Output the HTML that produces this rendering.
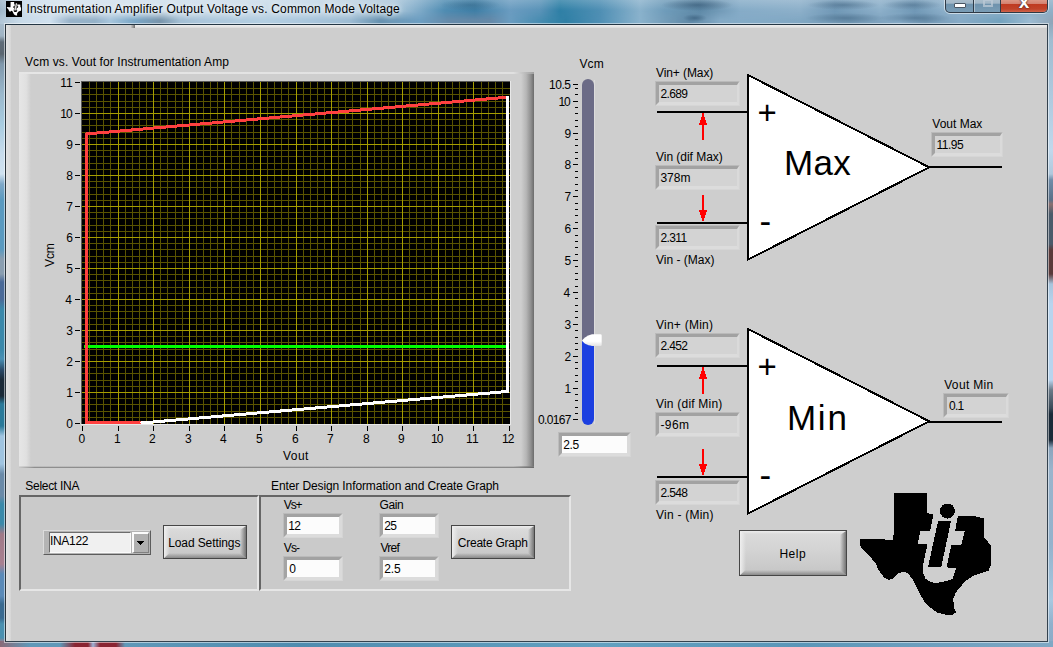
<!DOCTYPE html><html lang="en"><head><meta charset="utf-8"><title>Instrumentation Amplifier Output Voltage vs. Common Mode Voltage</title><style>
html,body{margin:0;padding:0;}
body{width:1053px;height:647px;overflow:hidden;position:relative;background:#6a9bb8;font-family:"Liberation Sans",sans-serif;font-size:12px;color:#000;}
.abs,.t,.ind,.num,.btn,.pnl{position:absolute;box-sizing:border-box;}
svg{position:absolute;overflow:visible;}
.t{white-space:nowrap;line-height:14px;}
#frame{position:absolute;left:0;top:0;width:1053px;height:647px;background:#6f9dbb;}
#tb{position:absolute;left:0;top:0;width:1053px;height:25px;background:
 linear-gradient(180deg,rgba(255,255,255,.18) 0,rgba(255,255,255,0) 40%),
 linear-gradient(90deg,#9fb6c8 0,#c9dbe9 24px,#d3e2ee 60px,#cadcea 250px,#c0d5e5 340px,#a9c6da 395px,#7eaac8 420px,#4f8cb2 445px,#3f7fa6 475px,#6a9cc0 510px,#5a93b8 540px,#2f80a6 560px,#4f8fb4 600px,#8ab2cc 640px,#6f9cba 665px,#5f8aa8 700px,#86acc8 740px,#8db0ca 800px,#7098b6 835px,#8db0ca 880px,#7098b6 915px,#8db0ca 945px,#8fb0c8 1053px);}
#tb2{position:absolute;left:0;top:11px;width:1053px;height:13px;-webkit-mask-image:linear-gradient(180deg,transparent 0,rgba(0,0,0,.85) 70%,rgba(0,0,0,.85) 100%);mask-image:linear-gradient(180deg,transparent 0,rgba(0,0,0,.85) 70%,rgba(0,0,0,.85) 100%);background:
 linear-gradient(90deg,#b4c8d8 0,#c8dae8 20px,#d0e0ee 50px,#8eaac2 70px,#8aa8c0 95px,#a0c0d8 110px,#6a9cc0 135px,#6a88a0 160px,#9cbad0 180px,#a5c2d8 200px,#b0cce0 264px,#a8c6dc 300px,#98b8d0 350px,#5a88a8 380px,#6494b6 400px,#6a9cc0 420px,#6a8aa8 450px,#6888a6 490px,#6a9cc0 510px,#3a86aa 550px,#2f7fa5 566px,#4f8fb4 600px,#8ab2cc 640px,#5f88a6 690px,#86acc8 720px,#7fa6c2 800px,#6f94b0 850px,#86aac6 900px,#6f94b0 925px,#86aac6 960px,#6fa0bc 1000px,#9dbcd2 1030px,#8fa3b5 1053px);}
#tb3{position:absolute;left:0;top:0;width:1053px;height:24px;background:
 radial-gradient(ellipse 36px 6px at 697px 5px,rgba(40,75,105,.55),rgba(40,75,105,0)),
 radial-gradient(ellipse 12px 4px at 695px 18px,rgba(40,75,105,.5),rgba(40,75,105,0)),
 radial-gradient(ellipse 36px 5px at 843px 5px,rgba(50,85,115,.45),rgba(50,85,115,0)),
 radial-gradient(ellipse 30px 5px at 912px 5px,rgba(50,85,115,.4),rgba(50,85,115,0)),
 radial-gradient(ellipse 40px 5px at 845px 18px,rgba(50,85,115,.4),rgba(50,85,115,0)),
 radial-gradient(ellipse 36px 5px at 915px 18px,rgba(50,85,115,.4),rgba(50,85,115,0)),
 radial-gradient(ellipse 30px 6px at 470px 5px,rgba(30,80,115,.35),rgba(30,80,115,0));}
#lb{position:absolute;left:0;top:24px;width:6px;height:623px;background:linear-gradient(180deg,#a8bccc 0px,#a0b4c4 12px,#5f6c78 18px,#5a6670 30px,#8098ac 40px,#9ab8cc 70px,#a8cce0 100px,#c8dcec 130px,#d0e2f0 150px,#7fa8c8 160px,#5a9ac0 176px,#5a9ac0 225px,#8a9eb0 235px,#8a9eb0 250px,#4a6a98 258px,#4a6a98 275px,#3a88aa 285px,#3a88aa 325px,#4a90b4 335px,#2a4a68 346px,#1a2a38 356px,#1a2a38 372px,#2a7a9a 380px,#2a7a9a 402px,#a0c4e0 412px,#a0c4e0 440px,#6a8aa8 450px,#6a8aa8 472px,#3a8aaa 480px,#3a8aaa 500px,#a07a88 510px,#a88090 540px,#5a8ab8 550px,#5a8ab8 572px,#3a6a90 580px,#3a6a90 594px,#4a90b0 600px,#4a90b0 614px,#a08090 618px,#a08090 623px);}
#rb{position:absolute;left:1047px;top:24px;width:6px;height:623px;background:linear-gradient(180deg,#8fa8bc 0px,#a0bcd0 16px,#b0cadf 76px,#c0d8ec 126px,#b0c8dc 150px,#6f8ca8 156px,#5a7088 176px,#8a7070 180px,#4a5a6a 190px,#4a5a6a 220px,#5a3a3a 226px,#5a3a3a 250px,#a8c4dc 260px,#b8d4ee 280px,#b8d4ee 356px,#6a7a88 366px,#3a4a58 384px,#1a2a38 390px,#1a2a38 416px,#8aa4bc 424px,#9ab4cc 446px,#94b2cc 520px,#a8c8e0 576px,#90b0cc 600px,#8aaac6 623px);}
#bb{position:absolute;left:0;top:641px;width:1053px;height:6px;background:linear-gradient(90deg,#8a6a78 0,#5f98b8 30px,#5f98b8 60px,#8a2432 75px,#8a2432 88px,#9fb4d8 93px,#8a2432 100px,#8a2432 116px,#5f98b8 125px,#4f8caf 300px,#62a0c0 600px,#5a96b8 800px,#7fa8c4 1053px);}
#client{position:absolute;left:5px;top:24px;width:1043px;height:618px;background:#cecece;border:1px solid;border-color:#243644 #34424e #34424e #2a343c;box-sizing:border-box;}
.ind{border-style:solid;border-width:1px;border-color:#bababa #d4d4d4 #d6d6d6 #bcbcbc;background:#d3d3d3;}
.ind i{position:absolute;left:0;top:0;right:0;bottom:0;border-style:solid;border-width:3px 2px 3px 3px;border-color:#a2a2a2 #dadada #dcdcdc #a4a4a4;}
.num{border-style:solid;border-width:1px;border-color:#bababa #d4d4d4 #d6d6d6 #bcbcbc;background:#fcfcfc;}
.num i{position:absolute;left:0;top:0;right:0;bottom:0;border-style:solid;border-width:3px;border-color:#a2a2a2 #dadada #dcdcdc #a4a4a4;}
.btn{border:1px solid #464646;background:linear-gradient(180deg,#dcdcdc 0,#d3d3d3 45%,#c5c5c5 100%);}
.btn i{position:absolute;display:block;}
.bt{left:0;right:0;top:0;height:3px;background:linear-gradient(180deg,#ededed,rgba(230,230,230,0));}
.bb{left:0;right:0;bottom:0;height:5px;background:linear-gradient(180deg,rgba(150,150,150,0),#8a8a8a);clip-path:polygon(0 100%,5px 0,calc(100% - 6px) 0,100% 100%);}
.bl{left:0;top:0;bottom:0;width:6px;background:linear-gradient(90deg,#efefef,rgba(232,232,232,0));clip-path:polygon(0 0,100% 4px,100% calc(100% - 5px),0 100%);}
.br{right:0;top:0;bottom:0;width:6px;background:linear-gradient(90deg,rgba(160,160,160,0),#747474);clip-path:polygon(100% 0,0 4px,0 calc(100% - 5px),100% 100%);}
.pnl{border-style:solid;border-width:2px;border-color:#666 #e6e6e6 #e6e6e6 #666;background:#cacaca;}
</style></head><body>
<div id="frame"></div><div id="tb"></div><div id="tb2"></div><div id="tb3"></div><div id="lb"></div><div id="rb"></div><div id="bb"></div>
<div id="client"></div>
<div class="abs" style="left:6px;top:25px;width:5px;height:616px;background:linear-gradient(90deg,#e4e4e4,#d6d6d6);"></div>
<div class="abs" style="left:135px;top:25px;width:912px;height:3px;background:linear-gradient(180deg,#ededed,#e4e4e4 60%,#d8d8d8);"></div>
<div class="abs" style="left:131px;top:25px;width:4px;height:3px;background:linear-gradient(90deg,#c4c4c4,#9a9a9a 50%,#6c6c6c);"></div>
<svg style="left:6px;top:1px" width="16" height="16" viewBox="0 0 16 16"><rect width="16" height="16" fill="#000"/><g transform="translate(0.9 1) scale(0.1085 0.1115) translate(-860 -493)"><path d="M893.8 493H927.1V513L933.4 514.6L957.4 516.2H974.7L983.7 518.3L984.2 537.2L990.6 545.2V565.3L988.6 570.6L981.3 573.2L973.3 575.9L965.4 581.2L960 587.2L955.4 593.2L953.4 598.5L953.7 606.5L956 612.5L952.7 614.5L945.4 614.7L937.4 612.5L929.5 607.1L924.8 602.5L918.8 591.9L912.2 578.6L907.5 573L902.9 571.6L898.2 573.5L892.9 578.6L888.9 579.9L884.3 577.9L878.9 570.6L875.6 563.3L868.3 554.6L861 547.3L860 544V538.8L888.2 539.6H892.9L893.6 534.5Z" fill="#fff"/><path d="M933.6 513.6L958 515.2L955 531.2H964.7L961.4 544.5H951.4L947 565.1L947.6 567.9L956 568.3L952.7 578.6L948.1 580.6L937.4 582.8L930.8 582.3L925.5 578.6L923.1 572.6V565.3L927.5 543.8H917.8L920.4 531.2H930.1Z" fill="#000"/><path d="M938.1 521.2H951L941.4 566.5H928.1Z" fill="#ddd" stroke="#ddd" stroke-width="3"/><circle cx="947.5" cy="511" r="7.5" fill="#fff"/></g></svg>
<div class="t" style="left:26.40px;top:2px;letter-spacing:0.178px;text-shadow:0 0 5px rgba(255,255,255,.9),0 0 8px rgba(255,255,255,.7);">Instrumentation Amplifier Output Voltage vs. Common Mode Voltage</div>
<div class="abs" style="left:944px;top:-1px;width:105px;height:15px;border:1px solid rgba(255,255,255,.55);border-radius:0 0 6px 6px"></div>
<div class="abs" style="left:945px;top:0;width:103px;height:13px;border:1px solid #2e3a46;border-top:none;border-radius:0 0 5px 5px;background:linear-gradient(180deg,#aabdcb 0,#a2b7c7 28%,#6e92ac 32%,#7a9db6 100%);overflow:hidden"><div class="abs" style="left:27px;top:0;width:1px;height:13px;background:#2e3a46"></div><div class="abs" style="left:28px;top:0;width:1px;height:13px;background:rgba(255,255,255,.4)"></div><div class="abs" style="left:54px;top:0;width:1px;height:13px;background:#2e3a46"></div><div class="abs" style="left:55px;top:0;width:47px;height:13px;background:linear-gradient(180deg,#dc9886 0,#d48270 28%,#bf3a20 32%,#c0442a 70%,#d57058 100%)"></div><div class="abs" style="left:8px;top:3px;width:12px;height:5px;background:#fff;border:1px solid #4a5662;border-radius:1px"></div><div class="abs" style="left:37px;top:-2px;width:10px;height:9px;border:2px solid #bccad6;border-top-width:3px;opacity:.75"></div></div>
<div class="t" style="left:1018.80px;top:-9.00px;font-size:19px;line-height:22px;color:#fff;font-weight:bold;text-shadow:0 0 1px #3a2020,0 0 2px #4a2a2a;">x</div>
<div class="abs" style="left:4px;top:23px;width:1045px;height:620px;border:1px solid rgba(255,255,255,.5)"></div>
<div class="t" style="left:25.00px;top:55px;letter-spacing:0.091px;">Vcm vs. Vout for Instrumentation Amp</div>
<div class="abs" style="left:19px;top:72px;width:515px;height:396px;background:#cecece"><div class="abs" style="left:0;top:0;width:12px;height:100%;background:linear-gradient(90deg,#e6e6e6 0,#e0e0e0 60%,#cecece 100%)"></div><div class="abs" style="right:0;top:0;width:13px;height:100%;background:linear-gradient(90deg,#cecece 0,#b6b6b6 40%,#909090 75%,#6c6c6c 100%)"></div><div class="abs" style="left:0;top:0;width:100%;height:2px;background:linear-gradient(90deg,#e6e6e6 0,#e0e0e0 96%,#a0a0a0 100%)"></div><div class="abs" style="left:0;bottom:1px;width:100%;height:1px;background:linear-gradient(90deg,#d4d4d4 0,#bcbcbc 3%,#b8b8b8 96%,#7a7a7a 100%)"></div><div class="abs" style="left:0;bottom:0;width:100%;height:1px;background:linear-gradient(90deg,#c8c8c8 0,#8e8e8e 3%,#8a8a8a 97%,#6a6a6a 100%)"></div></div>
<svg style="left:0;top:0" width="1053" height="647" viewBox="0 0 1053 647"><rect x="81" y="81" width="430" height="344" fill="#e8e8e8"/><rect x="81" y="81" width="429" height="343" fill="#5a5a5a"/><rect x="82" y="82" width="428" height="342" fill="#000"/><clipPath id="pc"><rect x="82" y="82" width="428" height="342"/></clipPath><path d="M89.5 82V424M96.5 82V424M103.5 82V424M110.5 82V424M125.5 82V424M132.5 82V424M139.5 82V424M146.5 82V424M160.5 82V424M167.5 82V424M175.5 82V424M182.5 82V424M196.5 82V424M203.5 82V424M210.5 82V424M217.5 82V424M231.5 82V424M239.5 82V424M246.5 82V424M253.5 82V424M267.5 82V424M274.5 82V424M281.5 82V424M288.5 82V424M303.5 82V424M310.5 82V424M317.5 82V424M324.5 82V424M338.5 82V424M345.5 82V424M352.5 82V424M360.5 82V424M374.5 82V424M381.5 82V424M388.5 82V424M395.5 82V424M409.5 82V424M416.5 82V424M424.5 82V424M431.5 82V424M445.5 82V424M452.5 82V424M459.5 82V424M466.5 82V424M481.5 82V424M488.5 82V424M495.5 82V424M502.5 82V424M82 417.5H510M82 411.5H510M82 404.5H510M82 398.5H510M82 386.5H510M82 380.5H510M82 373.5H510M82 367.5H510M82 355.5H510M82 349.5H510M82 342.5H510M82 336.5H510M82 324.5H510M82 318.5H510M82 311.5H510M82 305.5H510M82 293.5H510M82 287.5H510M82 280.5H510M82 274.5H510M82 262.5H510M82 256.5H510M82 249.5H510M82 243.5H510M82 231.5H510M82 225.5H510M82 218.5H510M82 212.5H510M82 200.5H510M82 194.5H510M82 187.5H510M82 181.5H510M82 169.5H510M82 163.5H510M82 156.5H510M82 150.5H510M82 138.5H510M82 132.5H510M82 125.5H510M82 119.5H510M82 107.5H510M82 101.5H510M82 94.5H510M82 88.5H510" stroke="#5a5400" stroke-width="1" fill="none" shape-rendering="crispEdges"/><path d="M118.5 82V424M153.5 82V424M189.5 82V424M224.5 82V424M260.5 82V424M296.5 82V424M331.5 82V424M367.5 82V424M402.5 82V424M438.5 82V424M473.5 82V424M82 392.5H510M82 361.5H510M82 330.5H510M82 299.5H510M82 268.5H510M82 237.5H510M82 206.5H510M82 175.5H510M82 144.5H510M82 113.5H510" stroke="#a69e00" stroke-width="1" fill="none" shape-rendering="crispEdges"/><g clip-path="url(#pc)" fill="none" stroke-width="3" shape-rendering="crispEdges" stroke-linejoin="miter"><path d="M84 346.5H508" stroke="#00ff00"/><path d="M140.5 422.5H86.5V133.94L507.5 97.18" stroke="#ff4040"/><path d="M140.5 423.07L507.5 391.47V96" stroke="#fff"/></g><path d="M75 423.5H80M75 392.5H80M75 361.5H80M75 330.5H80M75 299.5H80M75 268.5H80M75 237.5H80M75 206.5H80M75 175.5H80M75 144.5H80M75 113.5H80M75 82.5H80M82.5 426V431M118.5 426V431M153.5 426V431M189.5 426V431M224.5 426V431M260.5 426V431M296.5 426V431M331.5 426V431M367.5 426V431M402.5 426V431M438.5 426V431M473.5 426V431M509.5 426V431" stroke="#000" stroke-width="1" fill="none" shape-rendering="crispEdges"/></svg>
<div class="t" style="left:66.30px;top:417px;">0</div>
<div class="t" style="left:66.30px;top:386px;">1</div>
<div class="t" style="left:66.30px;top:355px;">2</div>
<div class="t" style="left:66.30px;top:324px;">3</div>
<div class="t" style="left:65.30px;top:293px;">4</div>
<div class="t" style="left:66.30px;top:262px;">5</div>
<div class="t" style="left:66.30px;top:231px;">6</div>
<div class="t" style="left:66.30px;top:200px;">7</div>
<div class="t" style="left:66.30px;top:169px;">8</div>
<div class="t" style="left:66.30px;top:138px;">9</div>
<div class="t" style="left:60.30px;top:107px;letter-spacing:-1.000px;">10</div>
<div class="t" style="left:60.30px;top:76px;">11</div>
<div class="t" style="left:78.60px;top:432px;">0</div>
<div class="t" style="left:114.10px;top:432px;">1</div>
<div class="t" style="left:149.10px;top:432px;">2</div>
<div class="t" style="left:185.10px;top:432px;">3</div>
<div class="t" style="left:220.10px;top:432px;">4</div>
<div class="t" style="left:256.10px;top:432px;">5</div>
<div class="t" style="left:292.10px;top:432px;">6</div>
<div class="t" style="left:327.10px;top:432px;">7</div>
<div class="t" style="left:363.10px;top:432px;">8</div>
<div class="t" style="left:398.10px;top:432px;">9</div>
<div class="t" style="left:431.10px;top:432px;letter-spacing:-1.000px;">10</div>
<div class="t" style="left:466.10px;top:432px;">11</div>
<div class="t" style="left:502.10px;top:432px;letter-spacing:-1.000px;">12</div>
<div class="t" style="left:283.00px;top:449px;letter-spacing:0.433px;">Vout</div>
<div class="t" style="left:54px;top:267.3px;transform-origin:0 0;transform:rotate(-90deg);"><div class="t" style="position:absolute;left:0;top:-11px;letter-spacing:-0.1px">Vcm</div></div>
<div class="t" style="left:579.50px;top:57px;letter-spacing:0.100px;">Vcm</div>
<div class="abs" style="left:582px;top:79px;width:12px;height:346px;background:linear-gradient(180deg,#6b6b86 0,#6b6b86 262px,#1b3fe0 262px,#1b3fe0 100%);border-radius:6px;"></div>
<svg style="left:0;top:0" width="1053" height="647"><path d="M575 88.5H578M575 94.5H578M573 101.5H578M575 107.5H578M575 113.5H578M575 120.5H578M575 126.5H578M573 133.5H578M575 139.5H578M575 145.5H578M575 152.5H578M575 158.5H578M573 164.5H578M575 171.5H578M575 177.5H578M575 184.5H578M575 190.5H578M573 196.5H578M575 203.5H578M575 209.5H578M575 215.5H578M575 222.5H578M573 228.5H578M575 235.5H578M575 241.5H578M575 247.5H578M575 254.5H578M573 260.5H578M575 266.5H578M575 273.5H578M575 279.5H578M575 286.5H578M573 292.5H578M575 298.5H578M575 305.5H578M575 311.5H578M575 317.5H578M573 324.5H578M575 330.5H578M575 337.5H578M575 343.5H578M575 349.5H578M573 356.5H578M575 362.5H578M575 368.5H578M575 375.5H578M575 381.5H578M573 388.5H578M575 394.5H578M575 400.5H578M575 407.5H578M575 413.5H578M573 84.5H578M573 419.5H578" stroke="#000" stroke-width="1" fill="none" shape-rendering="crispEdges"/><defs><linearGradient id="tg" x1="0" y1="0" x2="0" y2="1"><stop offset="0" stop-color="#fff"/><stop offset="0.6" stop-color="#fff"/><stop offset="1" stop-color="#e2e2e2"/></linearGradient></defs><path d="M594.5 80V424" stroke="#dcdcdc" stroke-width="1"/><path d="M582 340.6C583.2 338.4 586.5 335.6 592 334.2H600.4Q601.7 334.2 601.7 335.5V344.7Q601.7 346 600.4 346H592C587 345.4 583.4 343.2 582 340.6Z" fill="url(#tg)"/></svg>
<div class="t" style="left:549.10px;top:78px;letter-spacing:-0.500px;">10.5</div>
<div class="t" style="left:564.40px;top:382px;">1</div>
<div class="t" style="left:564.40px;top:350px;">2</div>
<div class="t" style="left:564.40px;top:318px;">3</div>
<div class="t" style="left:563.40px;top:286px;">4</div>
<div class="t" style="left:564.40px;top:254px;">5</div>
<div class="t" style="left:564.40px;top:222px;">6</div>
<div class="t" style="left:564.40px;top:190px;">7</div>
<div class="t" style="left:564.40px;top:158px;">8</div>
<div class="t" style="left:564.40px;top:127px;">9</div>
<div class="t" style="left:558.40px;top:95px;letter-spacing:-1.000px;">10</div>
<div class="t" style="left:538.00px;top:413px;letter-spacing:-0.680px;">0.0167</div>
<div class="num" style="left:558px;top:432px;width:73px;height:25px"><i></i></div>
<div class="t" style="left:563.30px;top:438px;letter-spacing:-0.400px;">2.5</div>
<svg style="left:0;top:0" width="1053" height="647"><path d="M748 75V259.6L929.2 167.3Z" fill="#fff" stroke="#000" stroke-width="2" stroke-linejoin="miter" shape-rendering="crispEdges"/><path d="M657 112H748M657 223H748M928 167H1002" stroke="#000" stroke-width="2" fill="none" shape-rendering="crispEdges"/><path d="M702 113h2v27h-2zM701 117h4v8h-4zM700 120h6v5h-6zM699 123h8v2h-8zM702 195h2v26h-2zM701 210h4v8h-4zM700 210h6v5h-6zM699 210h8v2h-8z" fill="#ff0000" shape-rendering="crispEdges"/></svg>
<div class="t" style="left:784.10px;top:143px;font-size:35px;line-height:40px;letter-spacing:0.250px;">Max</div>
<div class="t" style="left:757.60px;top:93.60px;font-size:33px;line-height:38px;">+</div>
<div class="t" style="left:759.50px;top:201.00px;font-size:35px;line-height:40px;">-</div>
<svg style="left:0;top:0" width="1053" height="647"><path d="M748 329V513.6L929.2 421.3Z" fill="#fff" stroke="#000" stroke-width="2" stroke-linejoin="miter" shape-rendering="crispEdges"/><path d="M657 366H748M657 477H748M928 422H1002" stroke="#000" stroke-width="2" fill="none" shape-rendering="crispEdges"/><path d="M702 367h2v27h-2zM701 371h4v8h-4zM700 374h6v5h-6zM699 377h8v2h-8zM702 449h2v26h-2zM701 464h4v8h-4zM700 464h6v5h-6zM699 464h8v2h-8z" fill="#ff0000" shape-rendering="crispEdges"/></svg>
<div class="t" style="left:786.90px;top:398px;font-size:35px;line-height:40px;letter-spacing:1.800px;">Min</div>
<div class="t" style="left:757.60px;top:347.60px;font-size:33px;line-height:38px;">+</div>
<div class="t" style="left:759.50px;top:455.00px;font-size:35px;line-height:40px;">-</div>
<div class="t" style="left:656.00px;top:66px;letter-spacing:-0.089px;">Vin+ (Max)</div>
<div class="ind" style="left:655px;top:81px;width:85px;height:25px"><i></i></div>
<div class="t" style="left:660.40px;top:87px;letter-spacing:-0.625px;">2.689</div>
<div class="t" style="left:656.00px;top:150px;letter-spacing:-0.033px;">Vin (dif Max)</div>
<div class="ind" style="left:655px;top:165px;width:85px;height:25px"><i></i></div>
<div class="t" style="left:660.40px;top:171px;letter-spacing:0.033px;">378m</div>
<div class="ind" style="left:655px;top:225px;width:85px;height:25px"><i></i></div>
<div class="t" style="left:660.40px;top:231px;letter-spacing:-0.575px;">2.311</div>
<div class="t" style="left:656.00px;top:253px;">Vin - (Max)</div>
<div class="t" style="left:932.30px;top:117px;">Vout Max</div>
<div class="ind" style="left:931px;top:132px;width:72px;height:25px"><i></i></div>
<div class="t" style="left:936.40px;top:138px;letter-spacing:-0.475px;">11.95</div>
<div class="t" style="left:656.00px;top:318px;letter-spacing:0.244px;">Vin+ (Min)</div>
<div class="ind" style="left:655px;top:333px;width:85px;height:25px"><i></i></div>
<div class="t" style="left:660.40px;top:339px;letter-spacing:-0.625px;">2.452</div>
<div class="t" style="left:656.00px;top:397px;letter-spacing:0.208px;">Vin (dif Min)</div>
<div class="ind" style="left:655px;top:412px;width:85px;height:25px"><i></i></div>
<div class="t" style="left:660.40px;top:418px;letter-spacing:0.433px;">-96m</div>
<div class="ind" style="left:655px;top:480px;width:85px;height:25px"><i></i></div>
<div class="t" style="left:660.40px;top:486px;letter-spacing:-0.625px;">2.548</div>
<div class="t" style="left:656.00px;top:508px;letter-spacing:0.240px;">Vin - (Min)</div>
<div class="t" style="left:944.20px;top:378px;letter-spacing:0.343px;">Vout Min</div>
<div class="ind" style="left:943px;top:393px;width:66px;height:25px"><i></i></div>
<div class="t" style="left:948.90px;top:399px;letter-spacing:-0.650px;">0.1</div>
<div class="t" style="left:25.30px;top:479px;letter-spacing:-0.289px;">Select INA</div>
<div class="t" style="left:271.00px;top:479px;letter-spacing:-0.103px;">Enter Design Information and Create Graph</div>
<div class="pnl" style="left:19px;top:495px;width:240px;height:96px"></div>
<div class="pnl" style="left:259px;top:495px;width:312px;height:96px"></div>
<div class="abs" style="left:43px;top:530px;width:108px;height:25px;background:#b4b4b4;border-style:solid;border-width:1px;border-color:#dcdcdc #5c5c5c #5c5c5c #dcdcdc"><div class="abs" style="left:5px;top:1px;width:82px;height:21px;background:#f0f0f0;border-style:solid;border-width:1px;border-color:#6c6c6c #fafafa #fafafa #6c6c6c"></div><div class="abs" style="left:88px;top:1px;width:17px;height:21px;background:#b0b0b0;border-style:solid;border-width:2px 1px 1px 2px;border-color:#fcfcfc #808080 #808080 #fcfcfc"></div></div>
<svg style="left:0;top:0" width="1053" height="647"><path d="M137 541h7v1h-1v1h-1v1h-1v1h-1v-1h-1v-1h-1v-1h-1z" fill="#000" shape-rendering="crispEdges"/></svg>
<div class="t" style="left:50.00px;top:534px;letter-spacing:-0.320px;">INA122</div>
<div class="btn" style="left:163px;top:525px;width:84px;height:34px"><i class="bt"></i><i class="bb"></i><i class="bl"></i><i class="br"></i></div>
<div class="t" style="left:168.20px;top:536px;letter-spacing:-0.100px;">Load Settings</div>
<div class="btn" style="left:451px;top:525px;width:84px;height:34px"><i class="bt"></i><i class="bb"></i><i class="bl"></i><i class="br"></i></div>
<div class="t" style="left:457.80px;top:536px;letter-spacing:-0.245px;">Create Graph</div>
<div class="btn" style="left:739px;top:530px;width:108px;height:46px"><i class="bt"></i><i class="bb"></i><i class="bl"></i><i class="br"></i></div>
<div class="t" style="left:779.40px;top:547px;letter-spacing:0.533px;">Help</div>
<div class="num" style="left:283px;top:513px;width:60px;height:25px"><i></i></div>
<div class="t" style="left:288.20px;top:519px;letter-spacing:-0.600px;">12</div>
<div class="t" style="left:283.80px;top:498px;letter-spacing:-1.100px;">Vs+</div>
<div class="num" style="left:379px;top:513px;width:60px;height:25px"><i></i></div>
<div class="t" style="left:384.20px;top:519px;letter-spacing:-0.500px;">25</div>
<div class="t" style="left:379.40px;top:498px;letter-spacing:-0.333px;">Gain</div>
<div class="num" style="left:283px;top:556px;width:60px;height:25px"><i></i></div>
<div class="t" style="left:289.20px;top:562px;">0</div>
<div class="t" style="left:283.80px;top:541px;letter-spacing:-0.850px;">Vs-</div>
<div class="num" style="left:379px;top:556px;width:60px;height:25px"><i></i></div>
<div class="t" style="left:384.20px;top:562px;letter-spacing:-0.150px;">2.5</div>
<div class="t" style="left:380.40px;top:541px;letter-spacing:-0.667px;">Vref</div>
<svg style="left:0;top:0" width="1053" height="647" shape-rendering="crispEdges"><path d="M893.8 493H927.1V513L933.4 514.6L957.4 516.2H974.7L983.7 518.3L984.2 537.2L990.6 545.2V565.3L988.6 570.6L981.3 573.2L973.3 575.9L965.4 581.2L960 587.2L955.4 593.2L953.4 598.5L953.7 606.5L956 612.5L952.7 614.5L945.4 614.7L937.4 612.5L929.5 607.1L924.8 602.5L918.8 591.9L912.2 578.6L907.5 573L902.9 571.6L898.2 573.5L892.9 578.6L888.9 579.9L884.3 577.9L878.9 570.6L875.6 563.3L868.3 554.6L861 547.3L860 544V538.8L888.2 539.6H892.9L893.6 534.5Z" fill="#000"/><path d="M933.6 513.6L958 515.2L955 531.2H964.7L961.4 544.5H951.4L947 565.1L947.6 567.9L956 568.3L952.7 578.6L948.1 580.6L937.4 582.8L930.8 582.3L925.5 578.6L923.1 572.6V565.3L927.5 543.8H917.8L920.4 531.2H930.1Z" fill="#cecece"/><path d="M938.1 521.2H951L941.4 566.5H928.1Z" fill="#000"/><circle cx="947.5" cy="511" r="7.5" fill="#000"/></svg>
</body></html>
